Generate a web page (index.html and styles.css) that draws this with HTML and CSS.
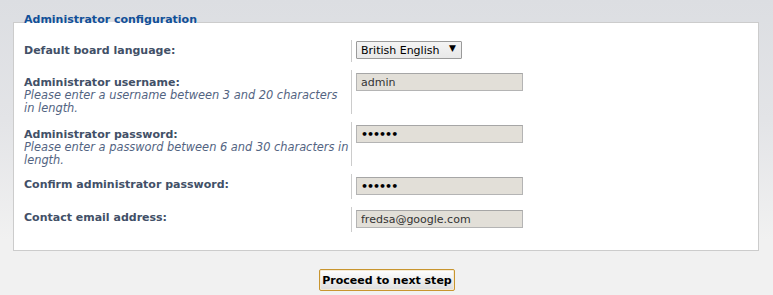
FILE: index.html
```html
<!DOCTYPE html>
<html>
<head>
	<meta charset="utf-8">
	<title>Administrator configuration</title>
	<link rel="stylesheet" href="styles.css">
</head>
<body>

	<form class="install">
		<fieldset class="config">
			<legend>Administrator configuration</legend>

			<dl class="row">
				<dt><label>Default board language:</label></dt>
				<dd class="pick">
					<span class="select-wrap">
						<select>
							<option>British English</option>
						</select>
					</span>
				</dd>
			</dl>

			<dl class="row">
				<dt class="has-explain">
					<label>Administrator username:</label>
					<span class="explain">Please enter a username between 3 and 20 characters in&nbsp;length.</span>
				</dt>
				<dd><input type="text" class="inputbox" value="admin"></dd>
			</dl>

			<dl class="row">
				<dt class="has-explain">
					<label>Administrator password:</label>
					<span class="explain">Please enter a password between 6 and 30 characters in length.</span>
				</dt>
				<dd><input type="password" class="inputbox" value="secret"></dd>
			</dl>

			<dl class="row">
				<dt><label>Confirm administrator password:</label></dt>
				<dd><input type="password" class="inputbox" value="secret"></dd>
			</dl>

			<dl class="row">
				<dt><label>Contact email address:</label></dt>
				<dd><input type="text" class="inputbox" value="fredsa@google.com"></dd>
			</dl>
		</fieldset>

		<div class="submit-buttons">
			<button type="button" class="button1">Proceed to next step</button>
		</div>
	</form>

</body>
</html>
```

FILE: styles.css
```css
html, body {
	height: 100%;
}
body {
	margin: 0;
	font-family: "DejaVu Sans", Verdana, sans-serif;
	font-size: 11px;
	color: #536482;
	background: linear-gradient(to bottom, #dcdee2 0, #e3e4e7 120px, #f1f1f1 240px, #f1f1f1 100%);
}
.install {
	padding-top: 13px;
}
.config {
	margin: 0 0 0 13px;
	width: 746px;
	box-sizing: border-box;
	padding: 4px 6px 14px 10px;
	border: 1px solid #cccccc;
	background: #ffffff;
	min-inline-size: 0;
}
.config legend {
	padding: 0 0 6px 0;
	font-weight: bold;
	line-height: 13px;
	color: #115098;
}
.row {
	display: grid;
	grid-template-columns: 327px 1fr;
	margin: 0;
	padding: 4px 0;
}
.row dt {
	padding: 4px 0 1px 0;
	line-height: 13px;
}
.row dt.has-explain {
	padding: 6px 0 0 0;
}
.row dt label {
	display: block;
	font-weight: bold;
	color: #425067;
}
.explain {
	display: block;
	font-size: 11.4px;
	font-style: italic;
	line-height: 12.5px;
	color: #536482;
}
.row dd {
	margin: 0;
	padding: 3px 0 4px 4px;
	border-left: 1px solid #cccccc;
}
.row dd.pick {
	padding: 1px 0 3px 4px;
}
.inputbox {
	display: block;
	box-sizing: border-box;
	width: 167px;
	height: 18px;
	margin: 0;
	padding: 0 4px;
	font-family: "DejaVu Sans", Verdana, sans-serif;
	font-size: 11px;
	color: #333333;
	background: #e2dfd8;
	border: 1px solid #b4b4b4;
	border-top-color: #a6a6a6;
	outline: none;
}
.inputbox[type="password"] {
	font-weight: bold;
	letter-spacing: -1px;
	color: #000000;
}
.select-wrap {
	position: relative;
	display: inline-block;
}
.select-wrap select {
	-webkit-appearance: none;
	appearance: none;
	display: block;
	box-sizing: border-box;
	width: 106px;
	height: 18px;
	margin: 0;
	padding: 0 18px 0 4px;
	font-family: "DejaVu Sans", Verdana, sans-serif;
	font-size: 11px;
	color: #000000;
	background: linear-gradient(to bottom, #f4f4f4, #e8e8e8);
	border: 1px solid #9a9a9a;
	border-radius: 1px;
}
.select-wrap::after {
	content: "\25BC";
	position: absolute;
	top: 2px;
	right: 6px;
	font-size: 9px;
	color: #000000;
	pointer-events: none;
}
.submit-buttons {
	display: flex;
	justify-content: center;
	padding-top: 18px;
	padding-left: 1px;
}
.button1 {
	box-sizing: border-box;
	width: 136px;
	height: 22px;
	padding: 0;
	font-family: "DejaVu Sans", Verdana, sans-serif;
	font-size: 11px;
	font-weight: bold;
	color: #000000;
	background: linear-gradient(to bottom, #ffffff, #dedede);
	border: 1px solid #c8952f;
	border-radius: 2px;
	box-shadow: inset 0 0 0 1px #f4ead6;
	cursor: pointer;
}
```
